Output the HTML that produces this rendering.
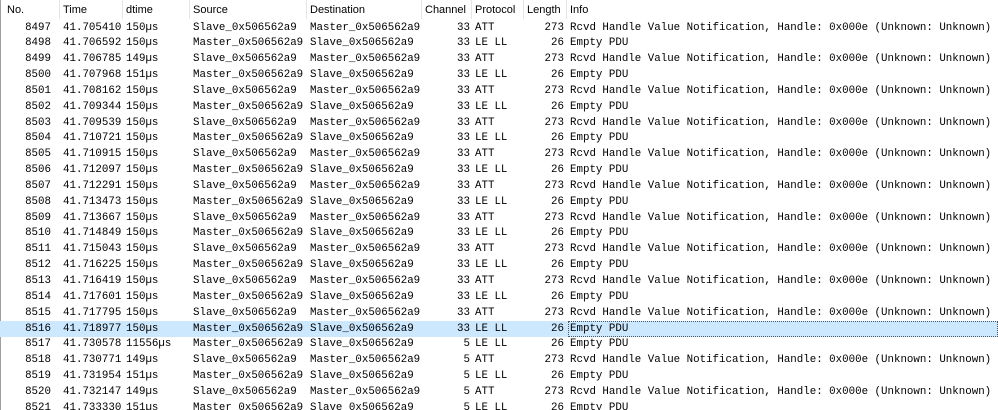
<!DOCTYPE html>
<html><head><meta charset="utf-8"><style>
html,body{margin:0;padding:0;background:#fff;width:998px;height:410px;overflow:hidden}
body{position:relative;font-family:"Liberation Mono",monospace;font-size:10.8px;color:#000}
.h{position:absolute;top:0;left:0;width:998px;height:19px;font-family:"Liberation Sans",sans-serif;font-size:11px}
.h span{position:absolute;top:4px}
.sep{position:absolute;top:0;height:19px;width:1px;background:#e5e5e5}
.r{position:absolute;left:0;width:998px;height:16px;line-height:16px;white-space:pre}
.r span{position:absolute;top:0}
.n{left:0;width:51px;text-align:right}
.t{left:63px}.d{left:126px}.s{left:193px}.ds{left:310px}
.r .c{left:428px;width:42px;text-align:right}
.p{left:475px}
.l{left:519px;width:45px;text-align:right}
.i{left:570px}
.sel{background:#cce8ff}
.foc{position:absolute;left:568px;top:0;width:428px;height:14px;border:1px dotted #555}
.lb{position:absolute;left:0;top:0;width:1px;height:410px;background:#a0a0a0}
</style></head><body>
<div class="h">
<span style="left:7px">No.</span><span style="left:63px">Time</span><span style="left:126px">dtime</span><span style="left:193px">Source</span><span style="left:310px">Destination</span><span style="left:425px">Channel</span><span style="left:475px">Protocol</span><span style="left:527px">Length</span><span style="left:570px">Info</span>
<div class="sep" style="left:59px"></div><div class="sep" style="left:122px"></div><div class="sep" style="left:189px"></div><div class="sep" style="left:306px"></div><div class="sep" style="left:421px"></div><div class="sep" style="left:471px"></div><div class="sep" style="left:523px"></div><div class="sep" style="left:566px"></div>
</div>
<div class="lb"></div>

<div class="r" style="top:19.5px"><span class="n">8497</span><span class="t">41.705410</span><span class="d">150µs</span><span class="s">Slave_0x506562a9</span><span class="ds">Master_0x506562a9</span><span class="c">33</span><span class="p">ATT</span><span class="l">273</span><span class="i">Rcvd Handle Value Notification, Handle: 0x000e (Unknown: Unknown)</span></div>
<div class="r" style="top:35.3px"><span class="n">8498</span><span class="t">41.706592</span><span class="d">150µs</span><span class="s">Master_0x506562a9</span><span class="ds">Slave_0x506562a9</span><span class="c">33</span><span class="p">LE LL</span><span class="l">26</span><span class="i">Empty PDU</span></div>
<div class="r" style="top:51.2px"><span class="n">8499</span><span class="t">41.706785</span><span class="d">149µs</span><span class="s">Slave_0x506562a9</span><span class="ds">Master_0x506562a9</span><span class="c">33</span><span class="p">ATT</span><span class="l">273</span><span class="i">Rcvd Handle Value Notification, Handle: 0x000e (Unknown: Unknown)</span></div>
<div class="r" style="top:67.0px"><span class="n">8500</span><span class="t">41.707968</span><span class="d">151µs</span><span class="s">Master_0x506562a9</span><span class="ds">Slave_0x506562a9</span><span class="c">33</span><span class="p">LE LL</span><span class="l">26</span><span class="i">Empty PDU</span></div>
<div class="r" style="top:82.9px"><span class="n">8501</span><span class="t">41.708162</span><span class="d">150µs</span><span class="s">Slave_0x506562a9</span><span class="ds">Master_0x506562a9</span><span class="c">33</span><span class="p">ATT</span><span class="l">273</span><span class="i">Rcvd Handle Value Notification, Handle: 0x000e (Unknown: Unknown)</span></div>
<div class="r" style="top:98.7px"><span class="n">8502</span><span class="t">41.709344</span><span class="d">150µs</span><span class="s">Master_0x506562a9</span><span class="ds">Slave_0x506562a9</span><span class="c">33</span><span class="p">LE LL</span><span class="l">26</span><span class="i">Empty PDU</span></div>
<div class="r" style="top:114.5px"><span class="n">8503</span><span class="t">41.709539</span><span class="d">150µs</span><span class="s">Slave_0x506562a9</span><span class="ds">Master_0x506562a9</span><span class="c">33</span><span class="p">ATT</span><span class="l">273</span><span class="i">Rcvd Handle Value Notification, Handle: 0x000e (Unknown: Unknown)</span></div>
<div class="r" style="top:130.4px"><span class="n">8504</span><span class="t">41.710721</span><span class="d">150µs</span><span class="s">Master_0x506562a9</span><span class="ds">Slave_0x506562a9</span><span class="c">33</span><span class="p">LE LL</span><span class="l">26</span><span class="i">Empty PDU</span></div>
<div class="r" style="top:146.2px"><span class="n">8505</span><span class="t">41.710915</span><span class="d">150µs</span><span class="s">Slave_0x506562a9</span><span class="ds">Master_0x506562a9</span><span class="c">33</span><span class="p">ATT</span><span class="l">273</span><span class="i">Rcvd Handle Value Notification, Handle: 0x000e (Unknown: Unknown)</span></div>
<div class="r" style="top:162.1px"><span class="n">8506</span><span class="t">41.712097</span><span class="d">150µs</span><span class="s">Master_0x506562a9</span><span class="ds">Slave_0x506562a9</span><span class="c">33</span><span class="p">LE LL</span><span class="l">26</span><span class="i">Empty PDU</span></div>
<div class="r" style="top:177.9px"><span class="n">8507</span><span class="t">41.712291</span><span class="d">150µs</span><span class="s">Slave_0x506562a9</span><span class="ds">Master_0x506562a9</span><span class="c">33</span><span class="p">ATT</span><span class="l">273</span><span class="i">Rcvd Handle Value Notification, Handle: 0x000e (Unknown: Unknown)</span></div>
<div class="r" style="top:193.7px"><span class="n">8508</span><span class="t">41.713473</span><span class="d">150µs</span><span class="s">Master_0x506562a9</span><span class="ds">Slave_0x506562a9</span><span class="c">33</span><span class="p">LE LL</span><span class="l">26</span><span class="i">Empty PDU</span></div>
<div class="r" style="top:209.6px"><span class="n">8509</span><span class="t">41.713667</span><span class="d">150µs</span><span class="s">Slave_0x506562a9</span><span class="ds">Master_0x506562a9</span><span class="c">33</span><span class="p">ATT</span><span class="l">273</span><span class="i">Rcvd Handle Value Notification, Handle: 0x000e (Unknown: Unknown)</span></div>
<div class="r" style="top:225.4px"><span class="n">8510</span><span class="t">41.714849</span><span class="d">150µs</span><span class="s">Master_0x506562a9</span><span class="ds">Slave_0x506562a9</span><span class="c">33</span><span class="p">LE LL</span><span class="l">26</span><span class="i">Empty PDU</span></div>
<div class="r" style="top:241.3px"><span class="n">8511</span><span class="t">41.715043</span><span class="d">150µs</span><span class="s">Slave_0x506562a9</span><span class="ds">Master_0x506562a9</span><span class="c">33</span><span class="p">ATT</span><span class="l">273</span><span class="i">Rcvd Handle Value Notification, Handle: 0x000e (Unknown: Unknown)</span></div>
<div class="r" style="top:257.1px"><span class="n">8512</span><span class="t">41.716225</span><span class="d">150µs</span><span class="s">Master_0x506562a9</span><span class="ds">Slave_0x506562a9</span><span class="c">33</span><span class="p">LE LL</span><span class="l">26</span><span class="i">Empty PDU</span></div>
<div class="r" style="top:272.9px"><span class="n">8513</span><span class="t">41.716419</span><span class="d">150µs</span><span class="s">Slave_0x506562a9</span><span class="ds">Master_0x506562a9</span><span class="c">33</span><span class="p">ATT</span><span class="l">273</span><span class="i">Rcvd Handle Value Notification, Handle: 0x000e (Unknown: Unknown)</span></div>
<div class="r" style="top:288.8px"><span class="n">8514</span><span class="t">41.717601</span><span class="d">150µs</span><span class="s">Master_0x506562a9</span><span class="ds">Slave_0x506562a9</span><span class="c">33</span><span class="p">LE LL</span><span class="l">26</span><span class="i">Empty PDU</span></div>
<div class="r" style="top:304.6px"><span class="n">8515</span><span class="t">41.717795</span><span class="d">150µs</span><span class="s">Slave_0x506562a9</span><span class="ds">Master_0x506562a9</span><span class="c">33</span><span class="p">ATT</span><span class="l">273</span><span class="i">Rcvd Handle Value Notification, Handle: 0x000e (Unknown: Unknown)</span></div>
<div class="r sel" style="top:320.5px"><div class="foc"></div><span class="n">8516</span><span class="t">41.718977</span><span class="d">150µs</span><span class="s">Master_0x506562a9</span><span class="ds">Slave_0x506562a9</span><span class="c">33</span><span class="p">LE LL</span><span class="l">26</span><span class="i">Empty PDU</span></div>
<div class="r" style="top:336.3px"><span class="n">8517</span><span class="t">41.730578</span><span class="d">11556µs</span><span class="s">Master_0x506562a9</span><span class="ds">Slave_0x506562a9</span><span class="c">5</span><span class="p">LE LL</span><span class="l">26</span><span class="i">Empty PDU</span></div>
<div class="r" style="top:352.1px"><span class="n">8518</span><span class="t">41.730771</span><span class="d">149µs</span><span class="s">Slave_0x506562a9</span><span class="ds">Master_0x506562a9</span><span class="c">5</span><span class="p">ATT</span><span class="l">273</span><span class="i">Rcvd Handle Value Notification, Handle: 0x000e (Unknown: Unknown)</span></div>
<div class="r" style="top:368.0px"><span class="n">8519</span><span class="t">41.731954</span><span class="d">151µs</span><span class="s">Master_0x506562a9</span><span class="ds">Slave_0x506562a9</span><span class="c">5</span><span class="p">LE LL</span><span class="l">26</span><span class="i">Empty PDU</span></div>
<div class="r" style="top:383.8px"><span class="n">8520</span><span class="t">41.732147</span><span class="d">149µs</span><span class="s">Slave_0x506562a9</span><span class="ds">Master_0x506562a9</span><span class="c">5</span><span class="p">ATT</span><span class="l">273</span><span class="i">Rcvd Handle Value Notification, Handle: 0x000e (Unknown: Unknown)</span></div>
<div class="r" style="top:399.7px"><span class="n">8521</span><span class="t">41.733330</span><span class="d">151µs</span><span class="s">Master_0x506562a9</span><span class="ds">Slave_0x506562a9</span><span class="c">5</span><span class="p">LE LL</span><span class="l">26</span><span class="i">Empty PDU</span></div>
</body></html>
